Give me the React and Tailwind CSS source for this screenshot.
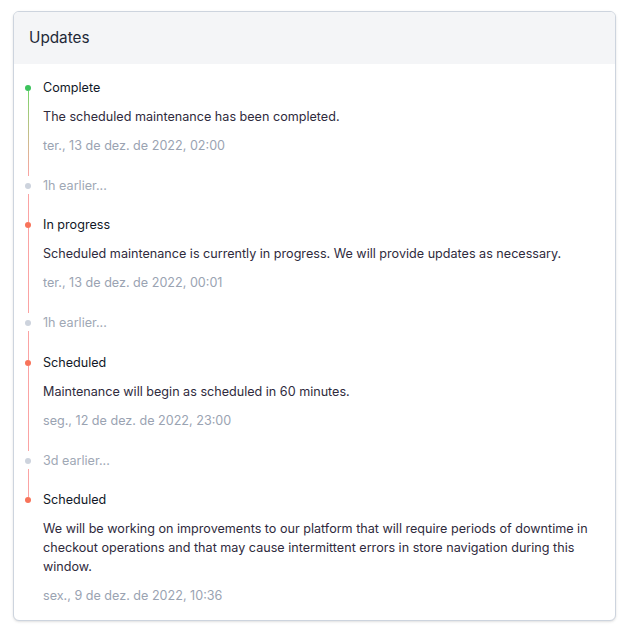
import React from "react";

const updates = [
  {
    title: "Complete",
    body: "The scheduled maintenance has been completed.",
    date: "ter., 13 de dez. de 2022, 02:00",
    dot: "bg-[#3cc35c]",
    first: true,
    earlier: "1h earlier...",
  },
  {
    title: "In progress",
    body: "Scheduled maintenance is currently in progress. We will provide updates as necessary.",
    date: "ter., 13 de dez. de 2022, 00:01",
    dot: "bg-[#f8735a]",
    earlier: "1h earlier...",
  },
  {
    title: "Scheduled",
    body: "Maintenance will begin as scheduled in 60 minutes.",
    date: "seg., 12 de dez. de 2022, 23:00",
    dot: "bg-[#f8735a]",
    earlier: "3d earlier...",
  },
  {
    title: "Scheduled",
    body: "We will be working on improvements to our platform that will require periods of downtime in checkout operations and that may cause intermittent errors in store navigation during this window.",
    date: "sex., 9 de dez. de 2022, 10:36",
    dot: "bg-[#f8735a]",
    last: true,
  },
];

function Update({ item }) {
  return (
    <>
      <div className="flex">
        {/* timeline column */}
        <div className="w-[6px] flex flex-col items-center shrink-0">
          <div className={`w-px h-[7px] ${item.first ? "" : "bg-[#fba3a3]"}`} />
          <div className={`w-[6px] h-[6px] rounded-full ${item.dot}`} />
          {!item.last && (
            <div
              className={`w-px flex-1 ${
                item.first
                  ? "bg-gradient-to-b from-[#74d46a] to-[#fba3a3]"
                  : "bg-[#fba3a3]"
              }`}
            />
          )}
        </div>
        <div className={`ml-[12px] flex-1 ${item.last ? "pb-[14px]" : "pb-[20px]"}`}>
          <div className="text-[12.6px] leading-[20px] text-[#111827]">{item.title}</div>
          <p className="mt-[9px] text-[12.6px] leading-[19px] text-[#2f2b3d]">{item.body}</p>
          <div className="mt-[10px] text-[12.6px] leading-[20px] text-[#9aa3b2]">{item.date}</div>
        </div>
      </div>
      {item.earlier && (
        <div className="flex">
          <div className="w-[6px] flex flex-col items-center shrink-0">
            <div className="h-[7px]" />
            <div className="w-[6px] h-[6px] rounded-full bg-[#cdd3dd]" />
            <div className="h-[5px]" />
            <div className="w-px flex-1 bg-[#fba3a3]" />
          </div>
          <div className="ml-[12px] pb-[19.33px] text-[12.6px] leading-[20px] text-[#a0a8b5]">
            {item.earlier}
          </div>
        </div>
      )}
    </>
  );
}

export default function App() {
  return (
    <div className="min-h-screen bg-white pt-[11px] pl-[13px] pr-[11px]" style={{ fontFamily: "Inter, 'Noto Sans', sans-serif" }}>
      <div className="w-[603px] rounded-md border border-[#cdd4de] shadow-sm overflow-hidden bg-white">
        <div className="h-[52px] bg-[#f4f5f7] flex items-center px-[15px]">
          <h2 className="text-[15.3px] text-[#1f2937]">Updates</h2>
        </div>
        <div className="pl-[11px] pr-[16px] pt-[14px]">
          {updates.map((u, i) => (
            <Update key={i} item={u} />
          ))}
        </div>
      </div>
    </div>
  );
}
